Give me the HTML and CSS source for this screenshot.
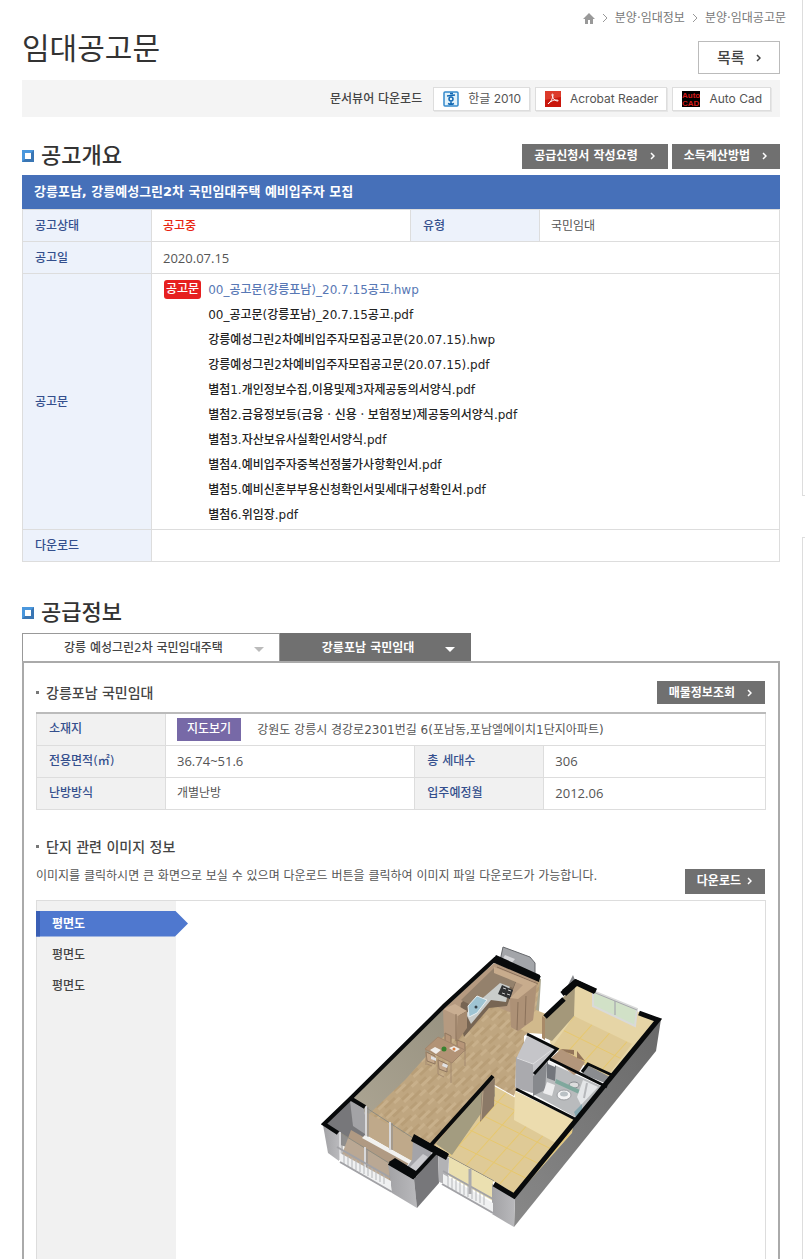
FILE: index.html
```html
<!DOCTYPE html>
<html lang="ko">
<head>
    <meta charset="UTF-8">
    <meta name="viewport" content="width=device-width, initial-scale=1.0">
    <title>임대공고문</title>
    <link rel="stylesheet" href="styles.css">
</head>
<body>

<div class="page">
<main class="content">
    <nav class="location">
        <a href="#"><svg width="12" height="11" viewBox="0 0 12 11"><path d="M6 0L0 6h2v5h3V7h2v4h3V6h2z" fill="#999"/></svg></a>
        <svg class="sep" width="6" height="10" viewBox="0 0 6 10"><path d="M1 1l4 4-4 4"/></svg>
        <a href="#">분양·임대정보</a>
        <svg class="sep" width="6" height="10" viewBox="0 0 6 10"><path d="M1 1l4 4-4 4"/></svg>
        <a href="#">분양·임대공고문</a>
    </nav>

    <div class="title-row">
        <h1>임대공고문</h1>
        <button type="button" class="btn-list">목록 <svg class="arrow" width="5" height="8" viewBox="0 0 5 8"><path d="M1 1l3 3-3 3"/></svg></button>
    </div>

    <!-- 문서뷰어 -->
    <div class="viewer">
        <span class="viewer-label">문서뷰어 다운로드</span>
        <a href="#" class="viewer-btn">
            <svg width="16" height="16" viewBox="0 0 16 16">
                <rect x="1" y="1" width="14" height="14" rx="1" fill="#e3f3fb" stroke="#3489cb" stroke-width="1.500"/>
                <path d="M7 2.500h3M4 5l8-1M5 12.500c2 1 4 1 6 0M8 10.500v2" stroke="#1268b3" stroke-width="1.500" fill="none"/>
                <circle cx="8" cy="8" r="2" stroke="#1268b3" stroke-width="1.500" fill="none"/>
            </svg>
            <span>한글 2010</span>
        </a>
        <a href="#" class="viewer-btn">
            <svg width="16" height="16" viewBox="0 0 16 16">
                <rect width="16" height="16" fill="#c9160c"/>
                <path d="M0 0h16v6L0 9z" fill="#dc3a2a"/>
                <path d="M3 13c3-2 5-6 5-9 0-2-1-1-1 0 1 4 3 6 6 6 1-1-2-1-4-1-2 1-5 2-6 4z" stroke="#fff" fill="none"/>
            </svg>
            <span>Acrobat Reader</span>
        </a>
        <a href="#" class="viewer-btn">
            <svg width="18" height="16" viewBox="0 0 18 16">
                <rect width="18" height="16" fill="#000"/>
                <text x="0" y="7" class="cad-text">Auto</text>
                <text x="0" y="15" class="cad-text">CAD</text>
            </svg>
            <span>Auto Cad</span>
        </a>
    </div>

    <!-- 공고개요 -->
    <div class="section-head">
        <h2>공고개요</h2>
        <div class="btns">
            <button type="button" class="btn">공급신청서 작성요령 <svg class="arrow" width="5" height="8" viewBox="0 0 5 8"><path d="M1 1l3 3-3 3"/></svg></button>
            <button type="button" class="btn">소득계산방법 <svg class="arrow" width="5" height="8" viewBox="0 0 5 8"><path d="M1 1l3 3-3 3"/></svg></button>
        </div>
    </div>
    <h3 class="notice-title">강릉포남, 강릉예성그린2차 국민임대주택 예비입주자 모집</h3>
    <table class="tbl">
        <colgroup><col class="c-th"><col class="c-td"><col class="c-th"><col></colgroup>
        <tr>
            <th scope="row">공고상태</th>
            <td class="state">공고중</td>
            <th scope="row">유형</th>
            <td>국민임대</td>
        </tr>
        <tr>
            <th scope="row">공고일</th>
            <td colspan="3" class="num">2020.07.15</td>
        </tr>
        <tr>
            <th scope="row">공고문</th>
            <td colspan="3" class="file-cell">
                <div class="files">
                    <span class="badge">공고문</span>
                    <ul>
                        <li><a href="#" class="on">00_공고문(강릉포남)_20.7.15공고.hwp</a></li>
                        <li><a href="#">00_공고문(강릉포남)_20.7.15공고.pdf</a></li>
                        <li><a href="#">강릉예성그린2차예비입주자모집공고문(20.07.15).hwp</a></li>
                        <li><a href="#">강릉예성그린2차예비입주자모집공고문(20.07.15).pdf</a></li>
                        <li><a href="#">별첨1.개인정보수집,이용및제3자제공동의서양식.pdf</a></li>
                        <li><a href="#">별첨2.금융정보등(금융ㆍ신용ㆍ보험정보)제공동의서양식.pdf</a></li>
                        <li><a href="#">별첨3.자산보유사실확인서양식.pdf</a></li>
                        <li><a href="#">별첨4.예비입주자중복선정불가사항확인서.pdf</a></li>
                        <li><a href="#">별첨5.예비신혼부부용신청확인서및세대구성확인서.pdf</a></li>
                        <li><a href="#">별첨6.위임장.pdf</a></li>
                    </ul>
                </div>
            </td>
        </tr>
        <tr>
            <th scope="row">다운로드</th>
            <td colspan="3"></td>
        </tr>
    </table>

    <!-- 공급정보 -->
    <div class="section-head supply">
        <h2>공급정보</h2>
    </div>
    <div class="tabs">
        <button type="button" class="tab">강릉 예성그린2차 국민임대주택 <i class="caret"></i></button>
        <button type="button" class="tab on">강릉포남 국민임대 <i class="caret"></i></button>
    </div>

    <div class="panel">
        <div class="sub-head">
            <h4>강릉포남 국민임대</h4>
            <button type="button" class="btn btn-sm">매물정보조회 <svg class="arrow" width="5" height="8" viewBox="0 0 5 8"><path d="M1 1l3 3-3 3"/></svg></button>
        </div>
        <table class="tbl tbl-gray">
            <colgroup><col class="c-th"><col class="c-td"><col class="c-th"><col></colgroup>
            <tr>
                <th scope="row">소재지</th>
                <td colspan="3"><button type="button" class="btn-map">지도보기</button>강원도 강릉시 경강로2301번길 6(포남동,포남엘에이치1단지아파트)</td>
            </tr>
            <tr>
                <th scope="row">전용면적(㎡)</th>
                <td class="num">36.74~51.6</td>
                <th scope="row">총 세대수</th>
                <td class="num">306</td>
            </tr>
            <tr>
                <th scope="row">난방방식</th>
                <td>개별난방</td>
                <th scope="row">입주예정월</th>
                <td class="num">2012.06</td>
            </tr>
        </table>

        <h4 class="img-head">단지 관련 이미지 정보</h4>
        <div class="img-desc">
            <p>이미지를 클릭하시면 큰 화면으로 보실 수 있으며 다운로드 버튼을 클릭하여 이미지 파일 다운로드가 가능합니다.</p>
            <button type="button" class="btn btn-down">다운로드 <svg class="arrow" width="5" height="8" viewBox="0 0 5 8"><path d="M1 1l3 3-3 3"/></svg></button>
        </div>

        <div class="gallery">
            <ul class="gallery-menu">
                <li class="on"><a href="#">평면도</a></li>
                <li><a href="#">평면도</a></li>
                <li><a href="#">평면도</a></li>
            </ul>
            <div class="gallery-view">
                <svg class="plan" width="391" height="295" viewBox="275 940 391 295">
                    <defs>
                        <pattern id="wood" width="24" height="12" patternUnits="userSpaceOnUse" patternTransform="rotate(-43)">
                            <rect width="24" height="12" fill="#bfa680"/>
                            <path d="M0 0h13v3H0zM16 6h8v3h-8z" fill="#c8b08b"/>
                            <path d="M6 3h14v3H6zM0 9h9v3H0z" fill="#b89e77"/>
                        </pattern>
                        <pattern id="tile" width="19" height="19" patternUnits="userSpaceOnUse" patternTransform="matrix(.92 .45 -.68 .76 515 1110)">
                            <rect width="19" height="19" fill="#dfca96"/>
                            <path d="M0 0h19M0 0v19" stroke="#e6c76e" stroke-width="2"/>
                        </pattern>
                        <linearGradient id="inner" x1="1" y1="0" x2="0" y2="1">
                            <stop offset="0" stop-color="#8f8a79"/><stop offset="1" stop-color="#aba492"/>
                        </linearGradient>
                        <linearGradient id="face" x1="0" y1="0" x2="1" y2="0">
                            <stop offset="0" stop-color="#a2a2a5"/><stop offset="1" stop-color="#b9b9bc"/>
                        </linearGradient>
                        <linearGradient id="side" x1="1" y1="0" x2="0" y2="1">
                            <stop offset="0" stop-color="#696969"/><stop offset="1" stop-color="#888"/>
                        </linearGradient>
                    </defs>
                    <!-- 외벽 -->
                    <path d="M661 1019l-5 32-142 176 1-30z" fill="url(#side)"/>
                    <path d="M503 947l27 10 5 6v16l-35-18z" fill="#a3a5a9" stroke="#66686c"/>
                    <path d="M505 955l10 4-4 5-9-4z" fill="#d5d6d9"/>
                    <path d="M536 978l5 1-2 32-7 2z" fill="#aaa791"/>
                    <!-- 거실 -->
                    <path d="M497 964l43 18-4 28 12 8-24 18v30l-10 30-21-12-61 68-20-11-48-28 84-88z" fill="url(#wood)"/>
                    <path d="M494 960l-51 44-92 97 17 14 37-35 40-45z" fill="url(#inner)"/>
                    <path d="M536 1010l10 4-2 20-15-1-9-4z" fill="#d1b98c"/>
                    <path d="M542 1016l3 2v22l-3-2z" fill="#a88a68"/>
                    <!-- 주방 -->
                    <path d="M443 1010l51-47 43 17-4 40-15 11-7-4 1-14-26-11-30 38-12-5z" fill="#b59a80"/>
                    <path d="M461 1003l34-34 22 10-10 27-18 2-25 29-5-19z" fill="#776553"/>
                    <path d="M466 1014l27-35 17 7-4 16-15-2-20 24z" fill="#c9ccca"/>
                    <path d="M494 968l-33 32 12 6-3 3 30-26 13 5 4-10z" fill="#94816c"/>
                    <path d="M468 1006l9-10 10 4-10 13-8 4z" fill="#9fc4d3" stroke="#e8eff1"/>
                    <circle cx="476" cy="1007" r="1.500" fill="#334149"/>
                    <path d="M502 985l11 5-3 9-12-5z" fill="#303132"/>
                    <path d="M503 988l3 1m2 1l3 1m-9 2l3 1m2 0l3 1" stroke="#ccc"/>
                    <path d="M443 1009l12-5 12 7-9 5z" fill="#c9ae92"/>
                    <path d="M458 1016l9-5v17l-10 14-1-3z" fill="#a58a70"/>
                    <path d="M510 998l7-6 20-12-4 40-15 11-7-4z" fill="#ad9176"/>
                    <path d="M518 1002l-1 28M526 996l-1 29M456 1014v27M497 967l41 17" stroke="#8b725b" fill="none"/>
                    <path d="M494 967l43 17-19 15-8-1 13-13-29-12z" fill="#c8ac8d"/>
                    <!-- 식탁 -->
                    <path d="M445 1033l6 3v9l-6-3zM457 1040l8 3v8l-8-3z" fill="#b69578" stroke="#8f775f"/>
                    <path d="M426 1052l9 4v8l-8-3zM438 1060l9 4v8l-8-3z" fill="#c5a88b" stroke="#8f775f"/>
                    <path d="M426 1049v16m12-6v15m13-12v21m14-32v15m-38-2l5 2m6 8l6 3" stroke="#a48a70" fill="none"/>
                    <path d="M425 1049l13-12 27 13-13 13z" fill="#b29376" stroke="#a2866c"/>
                    <path d="M430 1050l5-3 6 3-5 4zM449 1048l5-2 6 3-5 3z" fill="#f1eeea"/>
                    <circle cx="444" cy="1049" r="2.500" fill="#38812f"/><circle cx="454" cy="1049" r="1.500" fill="#d67e42"/>
                    <path d="M431 1056l5 2v3l-5-2zM443 1063l5 2-1 3-5-2z" fill="#e1e2e3"/>
                    <!-- 침실 1 -->
                    <path d="M575 984l82 36-46 60-60-34-6-26z" fill="#e6d5a6"/>
                    <path d="M574 1016l58 28-26 34-54-31z" fill="url(#tile)"/>
                    <path d="M575 984l-1 32-22 25-7-3v-20z" fill="#a4987a"/>
                    <path d="M564 993l9-18 2 5-1 5z" fill="#85878b"/>
                    <path d="M593 991l44 18-2 17-42-20z" fill="#d1e1c7" stroke="#d9dad9" stroke-width="2"/>
                    <path d="M615 1001v14" stroke="#b7beb8" stroke-width="2"/>
                    <path d="M593 992l44 18" stroke="#a6a7ac"/>
                    <!-- 욕실 -->
                    <path d="M527 1036l29 13-22 25-2 19-17-6 1-28z" fill="#c5c5c9"/>
                    <path d="M516 1057l17 7v29l-17-5z" fill="#aaaaae"/>
                    <path d="M517 1058l16 6 20-15" fill="none" stroke="#dedee0"/>
                    <path d="M548 1062l55 25-26 31-44-24v-18z" fill="#b9bbbd"/>
                    <path d="M533 1076l14-13-2 27-12 6z" fill="#87898d"/>
                    <path d="M547 1062l9 4-1 15-8-3z" fill="#73767c"/>
                    <path d="M548 1061l7 3v3l-7-3z" fill="#f2f2f3"/>
                    <path d="M547 1082l8 3-3 11-9-3z" fill="#ededee"/><ellipse cx="564" cy="1095" rx="7" ry="5" fill="#f5f5f6" stroke="#9b9da1"/>
                    <ellipse cx="564" cy="1094" rx="4" ry="2.500" fill="#bac1c5"/><ellipse cx="574" cy="1085" rx="5" ry="3" fill="#ddd" stroke="#898d90"/>
                    <path d="M556 1079l24 11-1 4-24-11z" fill="#7fa89d"/>
                    <path d="M583 1080l15 7-17 18-4-8z" fill="#e4e6e8"/><path d="M587 1083l-3 15" stroke="#b6b8bb" stroke-width="2"/>
                    <path d="M574 1112l8-8v6l-6 7z" fill="#85a6af"/>
                    <path d="M551 1058l10-9 24 13-6 10-5 3z" fill="#b3967b"/>
                    <path d="M561 1049l13 1v5l-8-3zM577 1051l8 10-8-3z" fill="#927459"/>
                    <path d="M587 1065l23 12-5 6-23-9z" fill="#8a8c8f"/>
                    <!-- 침실 2 -->
                    <path d="M494 1086l20 11 60 24-2 12-55 62-22-13-47-25-13-12z" fill="url(#tile)"/>
                    <path d="M515 1091l60 29-19 23-42-23z" fill="#ecdcae"/>
                    <path d="M493 1076l2 20-13 16-30 43-16-11z" fill="#a39c80"/>
                    <path d="M482 1090l13-12-1 28-14 16z" fill="#8b7967"/><path d="M483 1091l-2 29" stroke="#bba78b"/>
                    <!-- 발코니 -->
                    <path d="M351 1100l12 7 3 28-14 14-20-7-8-19z" fill="#77777a"/>
                    <path d="M350 1101l14 7 4 28-15-10z" fill="#a3a3a6"/>
                    <path d="M351 1130l58 33-18 22-50-28z" fill="#b09a83"/>
                    <path d="M366 1112l47 26v24l-47-27z" fill="#bfa98a"/>
                    <path d="M365 1135l49 27-3 3-49-27z" fill="#f1f1ef"/>
                    <path d="M413 1139l19 12-4 17-12 6-10-6 6-8z" fill="#a4a4a9"/>
                    <path d="M408 1169l15-15 5 3-14 16z" fill="#ccccd0"/>
                    <path d="M339 1132l50 31v26l-50-31z" fill="#d9d5c9" opacity=".25"/>
                    <path d="M365 1107l48 31M339 1132l50 31M448 1156l46 25" stroke="#8f8c80"/>
                    <path d="M366 1106v30M390 1122v28M340 1132v28M365 1147v26" stroke="#d8d8da" stroke-width="2"/>
                    <path d="M368 1107v30M392 1123v27M342 1134v27M367 1149v24" stroke="#8b8b8d"/>
                    <path d="M449 1157l44 24v20l-44-25z" fill="#ebe0b0"/>
                    <path d="M323 1125l16 8v28l-11-8z" fill="url(#face)"/>
                    <path d="M388 1164l26 15 3 29-25-15z" fill="url(#face)"/>
                    <path d="M414 1179l24-27 1 31-22 25z" fill="#77777a"/>
                    <path d="M438 1153l11 5-1 27-9-3z" fill="#b2b2b5"/>
                    <path d="M492 1184l23 14-1 29-22-13z" fill="url(#face)"/>
                    <path d="M340 1153l51 28v11l-51-29zM443 1174l50 29v11l-50-29z" fill="#f0f1f2"/>
                    <path d="M344 1154v10m4-8v10m4-8v10m4-8v10m4-8v10m4-8v10m4-8v10m4-8v10m4-8v10m4-8v10m4-8v10M448 1176v11m4-9v11m4-9v11m4-9v11m4-9v11m4-9v11m4-9v11m4-9v11m4-9v11m4-9v11" stroke="#b5b7ba"/>
                    <path d="M337 1147l54 31M340 1162l52 30M443 1171l50 28M442 1184l51 29" stroke="#a2a2a6" stroke-width="2"/>
                    <path d="M470 1169v25" stroke="#ababae" stroke-width="3"/>
                    <!-- 벽 윗면 -->
                    <g fill="none" stroke="#080a0b" stroke-width="5">
                        <path d="M545 1017l19-18M562 994l14-12 20 9M639 1013l19 7-144 176-20-12"/>
                        <path d="M516 1089l61 31M527 1034l30 15-23 25M550 1059l57 28M582 1072l6-8 26 12" stroke-width="3"/>
                    </g>
                    <g fill="none" stroke="#080a0b" stroke-width="4">
                        <path d="M338 1133l-14-9 26-25 94-93 51-47 45 19M350 1098l15 9"/>
                        <path d="M493 1076l-62 69M414 1137l33 18M438 1150l-25 27-24-14" />
                    </g>
                    <path d="M492 962l4-7 44 20-1 7zM562 990l13-11 21 10-2 5-17-8-11 10zM414 1134l35 20-3 6-35-19zM389 1162l24 17 3-2v-6l-21-13z" fill="#080a0b"/>
                </svg>
            </div>
        </div>
    </div>
</main>

<aside class="quick">
    <div class="quick-top"></div>
    <div class="quick-bottom"></div>
</aside>
</div>

</body>
</html>
```

FILE: styles.css
```css
/* 기본 */
*,
*::before {
    box-sizing: border-box;
}

body {
    margin: 0;
    background: #fff;
    font-family: "DejaVu Sans", "Noto Sans CJK KR", sans-serif;
    font-size: 12px;
    line-height: 20px;
    color: #555;
}

h1, h2, h3, h4, p, ul {
    margin: 0;
    padding: 0;
}

ul {
    list-style: none;
}

a {
    color: inherit;
    text-decoration: none;
}

button {
    font-family: inherit;
    font-size: 12px;
    line-height: 20px;
    border: 0;
    border-radius: 0;
    padding: 0;
    cursor: pointer;
}

.page {
    display: flex;
    min-height: 100vh;
}

.content {
    flex: 1;
    min-width: 0;
    display: flex;
    flex-direction: column;
    padding: 8px 22px 0;
}

/* 현재 위치 */
.location {
    display: flex;
    align-items: center;
    justify-content: flex-end;
    gap: 7px;
    margin-right: -6px;
    color: #777;
}

.location svg {
    display: block;
}

.sep {
    fill: none;
    stroke: #999;
}

.title-row {
    display: flex;
    justify-content: space-between;
    align-items: flex-end;
    height: 46px;
}

h1 {
    font-size: 30px;
    line-height: 50px;
    font-weight: 400;
    color: #333;
}

.arrow {
    fill: none;
    stroke: currentColor;
    stroke-width: 1.5;
}

.btn-list {
    display: flex;
    align-items: center;
    justify-content: space-between;
    width: 82px;
    height: 33px;
    padding: 0 18px;
    border: 1px solid #bbb;
    background: #fff;
    font-size: 15px;
    font-weight: 500;
    color: #444;
}

/* 문서뷰어 */
.viewer {
    display: flex;
    align-items: center;
    justify-content: flex-end;
    gap: 5px;
    height: 37px;
    margin-top: 6px;
    padding-right: 9px;
    background: #f4f4f4;
}

.viewer-label {
    margin-right: 6px;
    font-weight: 500;
    color: #444;
}

.viewer-btn {
    display: flex;
    align-items: center;
    gap: 9px;
    height: 24px;
    padding: 0 8px 0 9px;
    border: 1px solid #ddd;
    box-shadow: 1px 1px 0 #e6e6e6;
    background: #fff;
    font-family: Inter, "Noto Sans CJK KR", sans-serif;
}

.cad-text {
    font-family: "Liberation Sans", sans-serif;
    font-size: 8px;
    font-weight: 700;
    fill: #d11a1a;
}

/* 제목 */
.section-head {
    display: flex;
    align-items: center;
    justify-content: space-between;
    height: 26px;
    margin-top: 26px;
}

.supply {
    margin-top: 38px;
}

h2 {
    display: flex;
    align-items: center;
    gap: 7px;
    font-size: 22px;
    line-height: 26px;
    font-weight: 500;
    color: #333;
}

h2::before {
    content: "";
    width: 12px;
    height: 12px;
    border: 3px solid;
    border-color: #4a97dd #3a76b4 #3a76b4 #4a97dd;
}

.btns {
    display: flex;
    gap: 4px;
}

.btn {
    display: flex;
    align-items: center;
    gap: 12px;
    height: 25px;
    padding: 0 13px 0 12px;
    background: #707070;
    font-weight: 700;
    color: #fff;
}

.notice-title {
    height: 34px;
    margin-top: 6px;
    padding-left: 12px;
    background: #4670b9;
    font-size: 13px;
    line-height: 34px;
    font-weight: 700;
    color: #fff;
}

/* 표 */
.tbl {
    width: 100%;
    table-layout: fixed;
    border-collapse: collapse;
}

.c-th {
    width: 129px;
}

.c-td {
    width: 34.2%;
}

.tbl th,
.tbl td {
    height: 32px;
    padding: 0 11px;
    border: 1px solid #ddd;
    text-align: left;
}

.tbl th {
    padding-left: 12px;
    background: #edf2fb;
    font-weight: 500;
    color: #344f8d;
}

.tbl .num {
    font-family: "Open Sans", sans-serif;
    font-size: 13px;
}

.tbl .state {
    font-weight: 500;
    color: #e8230f;
}

.tbl .file-cell {
    padding: 4px 11px 1px;
}

.files {
    display: flex;
    align-items: flex-start;
    gap: 7px;
    line-height: 25px;
    font-weight: 500;
    color: #222;
}

.files .on {
    color: #5878b5;
}

.badge {
    margin: 2px 0 0 1px;
    padding: 0 2px;
    border-radius: 3px;
    background: #e62020;
    line-height: 19px;
    color: #fff;
}

/* 탭 */
.tabs {
    display: flex;
    margin-top: 7px;
}

.tab {
    display: flex;
    align-items: center;
    gap: 31px;
    height: 28px;
    padding: 0 15px 0 41px;
    border: 1px solid #999;
    border-bottom: 0;
    background: #fff;
    font-weight: 500;
    color: #444;
}

.tab.on {
    border-color: #707070;
    background: #707070;
    font-weight: 700;
    color: #fff;
}

.caret {
    margin-top: 4px;
    border: 5px solid transparent;
    border-top-color: #bbb;
    border-bottom: 0;
}

.tab.on .caret {
    border-top-color: #fff;
}

.panel {
    flex: 1;
    display: flex;
    flex-direction: column;
    padding: 18px 12px 0;
    border: 2px solid #aaa;
    border-bottom: 0;
}

.sub-head {
    display: flex;
    align-items: center;
    justify-content: space-between;
    height: 23px;
    margin-bottom: 8px;
}

h4 {
    display: flex;
    align-items: center;
    gap: 7px;
    font-size: 14px;
    line-height: 20px;
    font-weight: 500;
    color: #444;
}

h4::before {
    content: "";
    width: 3px;
    height: 3px;
    background: #777;
}

.btn-sm {
    height: 23px;
    margin-right: 1px;
}

.tbl-gray {
    border-top: 2px solid #bbb;
}

.tbl-gray th {
    background: #f1f1f1;
}

.btn-map {
    height: 23px;
    margin-right: 16px;
    padding: 0 10px;
    background: #7769a7;
    font-weight: 500;
    color: #fff;
}

/* 이미지 정보 */
.img-head {
    margin-top: 27px;
}

.img-desc {
    display: flex;
    justify-content: space-between;
    align-items: flex-start;
    margin-top: 9px;
}

.btn-down {
    gap: 6px;
    margin: 3px 1px 0 0;
}

.gallery {
    flex: 1;
    display: flex;
    margin-top: 6px;
    border: 1px solid #ddd;
    border-bottom: 0;
}

.gallery-menu {
    width: 139px;
    padding-top: 10px;
    background: #f1f1f1;
    font-weight: 500;
    color: #444;
}

.gallery-menu li {
    margin-bottom: 5px;
    padding-left: 15px;
    line-height: 26px;
}

.gallery-menu .on {
    margin: 0 -12px 5px -1px;
    padding-left: 12px;
    border-left: 4px solid #3a5fb5;
    background: #4f78cf;
    clip-path: polygon(0 0, calc(100% - 13px) 0, 100% 50%, calc(100% - 13px) 100%, 0 100%);
    font-weight: 700;
    color: #fff;
}

.gallery-view {
    flex: 1;
    padding-top: 39px;
    text-align: center;
}

/* 오른쪽 퀵메뉴 */
.quick {
    display: flex;
    flex-direction: column;
    gap: 41px;
    width: 3px;
}

.quick-top {
    height: 496px;
    border-left: 1px solid #ddd;
    border-bottom: 1px solid #ddd;
}

.quick-bottom {
    flex: 1;
    border-left: 1px solid #ddd;
    border-top: 1px solid #ddd;
}
```
